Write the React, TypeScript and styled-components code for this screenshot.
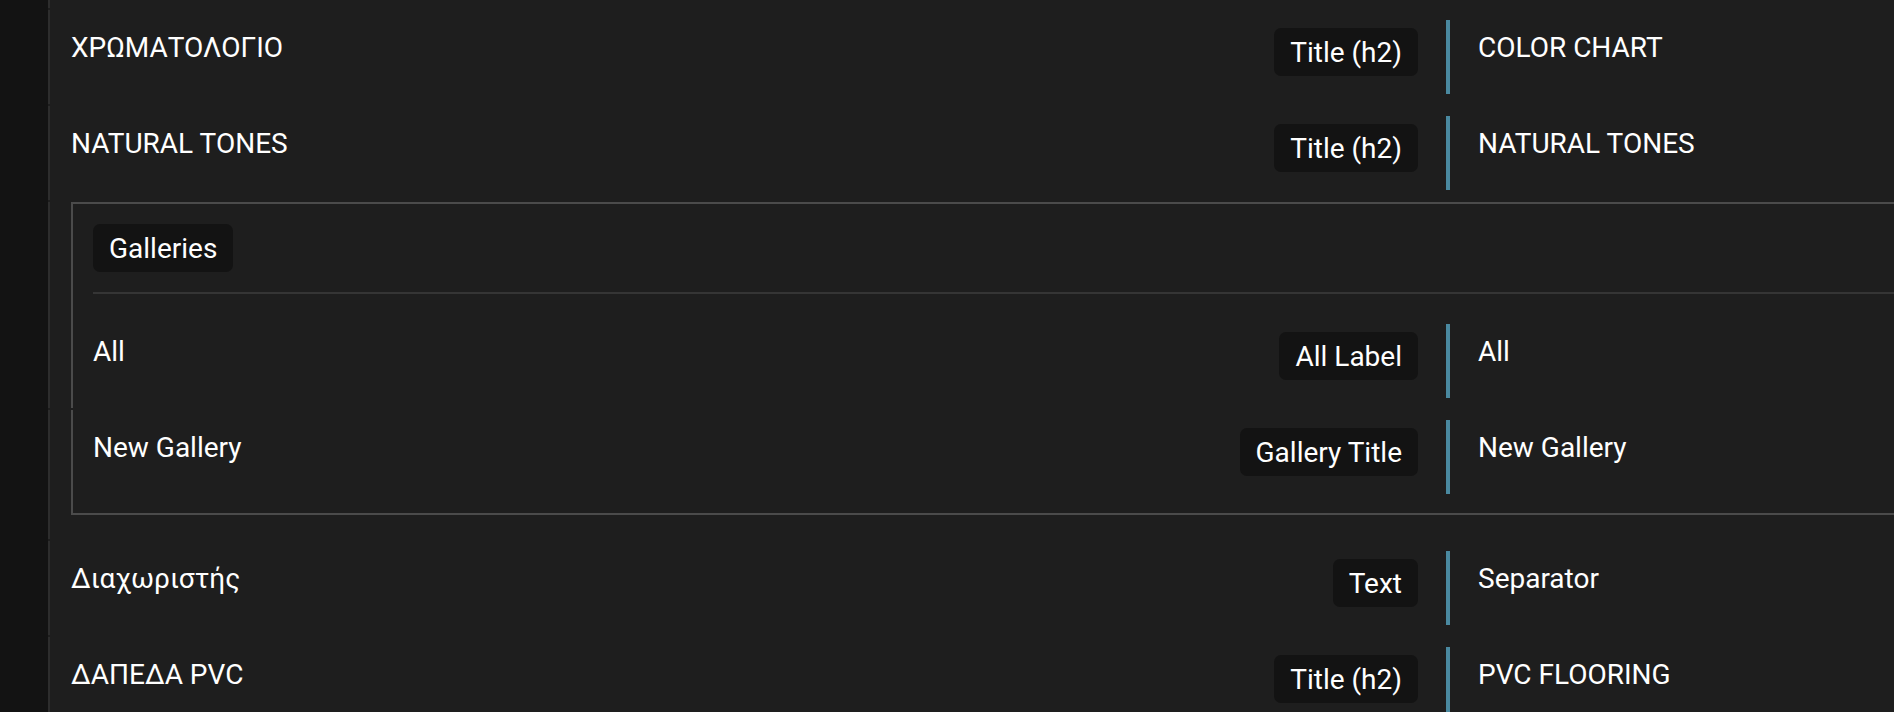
import React from 'react';
import styled, { createGlobalStyle } from 'styled-components';

const GlobalStyle = createGlobalStyle`
  html, body {
    margin: 0;
    padding: 0;
    background: #1e1e1e;
    overflow: hidden;
  }

  body {
    font-family: Roboto, "Noto Sans", sans-serif;
    color: #ffffff;
    -webkit-font-smoothing: antialiased;
  }
`;

const Shell = styled.div`
  display: flex;
  height: 100vh;
`;

const Sidebar = styled.aside`
  width: 48px;
  flex-shrink: 0;
  background: #131313;
`;

const Main = styled.main`
  flex: 1;
  min-width: 0;
  overflow: hidden;
  background: #1e1e1e;
`;

/* list is wider than the window, the right edge is scrolled out of view */
const List = styled.div`
  width: 1931px;
  display: flex;
  flex-direction: column;
  gap: 2px;
`;

const Item = styled.div<{ $tail?: boolean }>`
  border-left: 2px solid #2d2d2d;
  padding-left: 21px;
  height: ${props => (props.$tail ? '8px' : 'auto')};
`;

const Row = styled.div`
  display: grid;
  grid-template-columns: minmax(0, 1fr) auto 4px 501px;
  column-gap: 28px;
  align-items: start;
  height: 94px;
  box-sizing: border-box;
  padding: 10px 0;
`;

const Label = styled.div`
  font-size: 28px;
  line-height: 42px;
  margin-top: 7px;
  white-space: nowrap;
  overflow: hidden;
`;

const Badge = styled.span`
  display: inline-flex;
  align-items: center;
  justify-self: end;
  height: 48px;
  margin-top: 8px;
  padding: 0 16px;
  border-radius: 7px;
  background: #131313;
  font-size: 28px;
  white-space: nowrap;
`;

const Bar = styled.div`
  width: 4px;
  height: 74px;
  background: #4a89a0;
`;

const GalleryTop = styled.div`
  border: 2px solid #4b4b4b;
  border-bottom: none;
  margin-right: -2px;
  padding: 20px 0 0 20px;
`;

const GalleryHeader = styled.div`
  display: flex;
  padding-bottom: 20px;
  margin-bottom: 20px;
  border-bottom: 2px solid #353535;

  ${Badge} {
    margin-top: 0;
  }
`;

const GalleryBottom = styled.div`
  border: 2px solid #4b4b4b;
  border-top: none;
  margin-right: -2px;
  margin-bottom: 24px;
  padding: 0 0 9px 20px;
`;

interface Entry {
  source: string;
  kind: string;
  target: string;
}

function TranslationRow({ source, kind, target }: Entry): React.JSX.Element {
  return (
    <Row>
      <Label>{source}</Label>
      <Badge>{kind}</Badge>
      <Bar />
      <Label>{target}</Label>
    </Row>
  );
}

const before: Entry[] = [
  { source: 'ΧΡΩΜΑΤΟΛΟΓΙΟ', kind: 'Title (h2)', target: 'COLOR CHART' },
  { source: 'NATURAL TONES', kind: 'Title (h2)', target: 'NATURAL TONES' },
];

const after: Entry[] = [
  { source: 'Διαχωριστής', kind: 'Text', target: 'Separator' },
  { source: 'ΔΑΠΕΔΑ PVC', kind: 'Title (h2)', target: 'PVC FLOORING' },
];

export default function App(): React.JSX.Element {
  return (
    <>
      <GlobalStyle />
      <Shell>
        <Sidebar />
        <Main>
          <List>
            <Item $tail />
            {before.map(e => (
              <Item key={e.source}>
                <TranslationRow {...e} />
              </Item>
            ))}
            <Item>
              <GalleryTop>
                <GalleryHeader>
                  <Badge>Galleries</Badge>
                </GalleryHeader>
                <TranslationRow source="All" kind="All Label" target="All" />
              </GalleryTop>
            </Item>
            <Item>
              <GalleryBottom>
                <TranslationRow source="New Gallery" kind="Gallery Title" target="New Gallery" />
              </GalleryBottom>
            </Item>
            {after.map(e => (
              <Item key={e.source}>
                <TranslationRow {...e} />
              </Item>
            ))}
          </List>
        </Main>
      </Shell>
    </>
  );
}
